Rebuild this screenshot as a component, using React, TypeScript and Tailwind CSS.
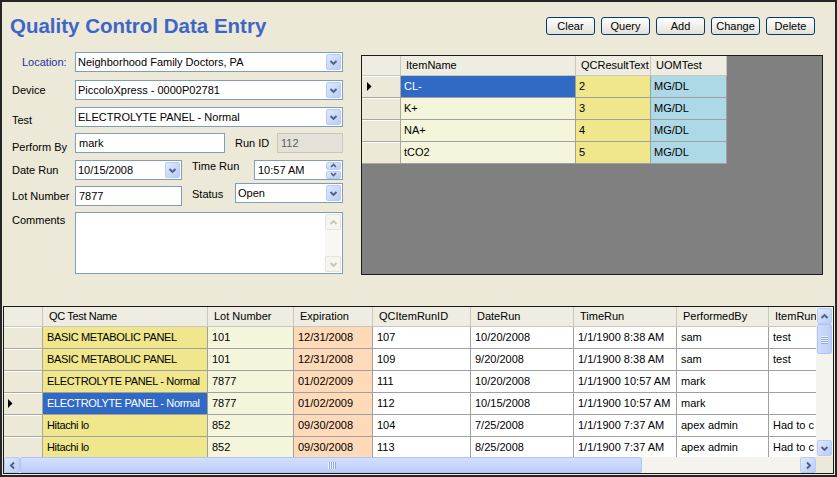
import React from "react";

type Dir = "up" | "down" | "left" | "right";

const CHEVRON: Record<Dir, string> = {
  down: "M1.5 3 L4.5 6 L7.5 3",
  up: "M1.5 6 L4.5 3 L7.5 6",
  left: "M6 1.5 L3 4.5 L6 7.5",
  right: "M3 1.5 L6 4.5 L3 7.5",
};

const Chevron = ({ dir, color = "#4d6185" }: { dir: Dir; color?: string }) => (
  <svg width="9" height="9" viewBox="0 0 9 9">
    <path d={CHEVRON[dir]} fill="none" stroke={color} strokeWidth="1.9" />
  </svg>
);

// XP style light blue button used by combos and scroll bars
const BlueBtn = ({ dir, className }: { dir: Dir; className: string }) => (
  <div
    className={`flex items-center justify-center shrink-0 rounded-[2px] border border-[#b7cbf6] bg-linear-to-br from-[#dfe9fe] to-[#b9ccf7] ${className}`}
  >
    <Chevron dir={dir} />
  </div>
);

const GreyBtn = ({ dir }: { dir: Dir }) => (
  <div className="h-[16px] w-full flex items-center justify-center shrink-0 rounded-[2px] border border-[#e6e4da] bg-[#f6f5f0]">
    <Chevron dir={dir} color="#c8c6b8" />
  </div>
);

const Combo = ({ value, className }: { value: string; className: string }) => (
  <div className={`h-[20px] bg-white border border-[#7f9db9] flex items-center pl-[2px] pr-px shrink-0 ${className}`}>
    <span className="flex-1 whitespace-nowrap overflow-hidden">{value}</span>
    <BlueBtn dir="down" className="w-[15px] h-[16px]" />
  </div>
);

const Label = ({ children, className = "" }: { children: React.ReactNode; className?: string }) => (
  <div className={`shrink-0 whitespace-nowrap ${className}`}>{children}</div>
);

const SelArrow = () => (
  <svg width="5" height="9" viewBox="0 0 5 9">
    <path d="M0 0 L4.5 4.5 L0 9 Z" fill="#000" />
  </svg>
);

const LeftForm = () => (
  <div className="w-[357px] shrink-0 pl-[10px] pt-[12px]">
    <div className="-ml-[2px] text-[20.5px] leading-[24px] font-bold text-[#3f66c6] whitespace-nowrap">
      Quality Control Data Entry
    </div>

    <div className="mt-[14px] flex items-center h-[20px]">
      <Label className="w-[63px] pl-[10px] text-[#22319a]">Location:</Label>
      <Combo value="Neighborhood Family Doctors, PA" className="w-[268px]" />
    </div>

    <div className="mt-[8px] flex items-center h-[20px]">
      <Label className="w-[63px]">Device</Label>
      <Combo value="PiccoloXpress - 0000P02781" className="w-[268px]" />
    </div>

    <div className="mt-[7px] flex items-center h-[20px]">
      <Label className="w-[63px] mt-[6px]">Test</Label>
      <Combo value="ELECTROLYTE PANEL - Normal" className="w-[268px]" />
    </div>

    <div className="mt-[6px] flex items-center h-[20px]">
      <Label className="w-[63px] mt-[8px]">Perform By</Label>
      <div className="w-[150px] h-[20px] bg-white border border-[#7f9db9] pl-[3px] flex items-center">mark</div>
      <Label className="ml-[10px] w-[42px]">Run ID</Label>
      <div className="w-[66px] h-[20px] bg-[#e3e1d8] border border-[#c9c7bb] pl-[3px] flex items-center text-[#5e5e5e]">
        112
      </div>
    </div>

    <div className="mt-[7px] flex items-center h-[20px]">
      <Label className="w-[63px]">Date Run</Label>
      <Combo value="10/15/2008" className="w-[107px]" />
      <Label className="ml-[10px] w-[62px] mb-[8px]">Time Run</Label>
      <div className="w-[89px] h-[20px] bg-white border border-[#7f9db9] pl-[3px] pr-px flex items-center">
        <span className="flex-1">10:57 AM</span>
        <div className="w-[15px] h-[17px] flex flex-col gap-px">
          <div className="flex-1 rounded-[2px] border border-[#b7cbf6] bg-linear-to-br from-[#dfe9fe] to-[#b9ccf7] flex items-center justify-center overflow-hidden">
            <svg width="7" height="5" viewBox="0 0 7 5"><path d="M1 4 L3.5 1.5 L6 4" fill="none" stroke="#4d6185" strokeWidth="1.6" /></svg>
          </div>
          <div className="flex-1 rounded-[2px] border border-[#b7cbf6] bg-linear-to-br from-[#dfe9fe] to-[#b9ccf7] flex items-center justify-center overflow-hidden">
            <svg width="7" height="5" viewBox="0 0 7 5"><path d="M1 1 L3.5 3.5 L6 1" fill="none" stroke="#4d6185" strokeWidth="1.6" /></svg>
          </div>
        </div>
      </div>
    </div>

    <div className="mt-[6px] flex items-center h-[20px]">
      <Label className="w-[63px]">Lot Number</Label>
      <div className="w-[107px] h-[20px] bg-white border border-[#7f9db9] pl-[3px] flex items-center">7877</div>
      <Label className="ml-[10px] w-[43px] mb-[4px]">Status</Label>
      <Combo value="Open" className="w-[108px] mb-[6px]" />
    </div>

    <div className="mt-[6px] flex items-start">
      <Label className="w-[63px] pt-[3px]">Comments</Label>
      <div className="w-[268px] h-[62px] bg-white border border-[#7f9db9] flex justify-end p-px">
        <div className="w-[16px] h-full flex flex-col bg-[#f8f7f3]">
          <GreyBtn dir="up" />
          <div className="flex-1" />
          <GreyBtn dir="down" />
        </div>
      </div>
    </div>
  </div>
);

const BUTTONS = ["Clear", "Query", "Add", "Change", "Delete"];

const ITEMS = [
  ["CL-", "2", "MG/DL"],
  ["K+", "3", "MG/DL"],
  ["NA+", "4", "MG/DL"],
  ["tCO2", "5", "MG/DL"],
];

const ITEM_COLS = [
  { title: "ItemName", w: "w-[175px]", bg: "bg-[#f5f5dc]" },
  { title: "QCResultText", w: "w-[75px]", bg: "bg-[#f0e68c]" },
  { title: "UOMTest", w: "w-[76px]", bg: "bg-[#add8e6]" },
];

const RightPane = () => (
  <div className="flex-1 flex flex-col pt-[15px]">
    <div className="flex justify-end gap-[6px] pr-[20px]">
      {BUTTONS.map((b) => (
        <button
          key={b}
          className="w-[49px] h-[18px] rounded-[3px] border border-[#003c74] bg-linear-to-b from-white to-[#e3e1d7] text-[11px] leading-none text-black flex items-center justify-center"
        >
          {b}
        </button>
      ))}
    </div>

    <div className="mt-[20px] ml-[2px] w-[462px] h-[220px] border border-[#1c1c1c] bg-[#808080] overflow-hidden">
      <div className="flex h-[20px]">
        <div className="w-[39px] shrink-0 bg-[#efede2] border-r border-b border-[#c9c7ba]" />
        {ITEM_COLS.map((c) => (
          <div
            key={c.title}
            className={`${c.w} shrink-0 bg-[#efede2] border-r border-b border-[#c9c7ba] pl-[5px] flex items-center whitespace-nowrap overflow-hidden`}
          >
            {c.title}
          </div>
        ))}
      </div>
      {ITEMS.map((r, i) => (
        <div key={i} className="flex h-[22px]">
          <div className="w-[39px] shrink-0 bg-[#ece9d8] border-r border-b border-[#aca899] shadow-[inset_0_1px_0_white] pl-[5px] flex items-center">
            {i === 0 && <SelArrow />}
          </div>
          {ITEM_COLS.map((c, j) => (
            <div
              key={j}
              className={`${c.w} shrink-0 ${i === 0 && j === 0 ? "bg-[#316ac5] text-white" : c.bg} border-r border-b border-[#a0a0a0] pl-[3px] flex items-center whitespace-nowrap overflow-hidden`}
            >
              {r[j]}
            </div>
          ))}
        </div>
      ))}
    </div>
  </div>
);

const RUN_COLS = [
  { title: "QC Test Name", w: "w-[165px] tracking-[-0.35px]", bg: "bg-[#f0e68c]" },
  { title: "Lot Number", w: "w-[86px]", bg: "bg-[#f5f5dc]" },
  { title: "Expiration", w: "w-[79px]", bg: "bg-[#ffdab9]" },
  { title: "QCItemRunID", w: "w-[98px]", bg: "bg-white" },
  { title: "DateRun", w: "w-[103px]", bg: "bg-white" },
  { title: "TimeRun", w: "w-[103px]", bg: "bg-white" },
  { title: "PerformedBy", w: "w-[92px]", bg: "bg-white" },
  { title: "ItemRun", w: "w-[120px]", bg: "bg-white" },
];

const RUNS = [
  ["BASIC METABOLIC PANEL", "101", "12/31/2008", "107", "10/20/2008", "1/1/1900 8:38 AM", "sam", "test"],
  ["BASIC METABOLIC PANEL", "101", "12/31/2008", "109", "9/20/2008", "1/1/1900 8:38 AM", "sam", "test"],
  ["ELECTROLYTE PANEL - Normal", "7877", "01/02/2009", "111", "10/20/2008", "1/1/1900 10:57 AM", "mark", ""],
  ["ELECTROLYTE PANEL - Normal", "7877", "01/02/2009", "112", "10/15/2008", "1/1/1900 10:57 AM", "mark", ""],
  ["Hitachi lo", "852", "09/30/2008", "104", "7/25/2008", "1/1/1900 7:37 AM", "apex admin", "Had to c"],
  ["Hitachi lo", "852", "09/30/2008", "113", "8/25/2008", "1/1/1900 7:37 AM", "apex admin", "Had to c"],
];

const Grip = ({ vertical }: { vertical?: boolean }) => (
  <div className={`flex ${vertical ? "flex-col" : ""} gap-px`}>
    {[0, 1, 2, 3].map((k) => (
      <div key={k} className={vertical ? "w-[7px] h-px bg-[#eef3ff] shadow-[0_1px_0_#8fa8e0]" : "h-[7px] w-px bg-[#eef3ff] shadow-[1px_0_0_#8fa8e0]"} />
    ))}
  </div>
);

const LowerGrid = () => (
  <div className="mx-px h-[168px] border border-[#1a1a1a] flex flex-col bg-white">
    <div className="flex-1 flex min-h-0">
      <div className="flex-1 min-w-0 overflow-hidden">
        <div className="flex h-[20px]">
          <div className="w-[39px] shrink-0 bg-[#efede2] border-r border-b border-[#c9c7ba]" />
          {RUN_COLS.map((c) => (
            <div
              key={c.title}
              className={`${c.w} shrink-0 bg-[#efede2] border-r border-b border-[#c9c7ba] pl-[6px] flex items-center whitespace-nowrap overflow-hidden`}
            >
              {c.title}
            </div>
          ))}
        </div>
        {RUNS.map((r, i) => (
          <div key={i} className="flex h-[22px]">
            <div className="w-[39px] shrink-0 bg-[#ece9d8] border-r border-b border-[#aca899] shadow-[inset_0_1px_0_white] pl-[4px] flex items-center">
              {i === 3 && <SelArrow />}
            </div>
            {RUN_COLS.map((c, j) => (
              <div
                key={j}
                className={`${c.w} shrink-0 ${i === 3 && j === 0 ? "bg-[#316ac5] text-white" : c.bg} border-r border-b border-[#a0a0a0] pl-[4px] flex items-center whitespace-nowrap overflow-hidden`}
              >
                {r[j]}
              </div>
            ))}
          </div>
        ))}
      </div>
      {/* vertical scroll bar */}
      <div className="w-[17px] shrink-0 flex flex-col bg-[#f4f3ee] p-px">
        <BlueBtn dir="up" className="w-full h-[16px]" />
        <div className="h-[30px] shrink-0 rounded-[2px] border border-[#b0c4f4] bg-linear-to-r from-[#cfdcfd] to-[#bccdf8] flex items-center justify-center">
          <Grip vertical />
        </div>
        <div className="flex-1" />
        <BlueBtn dir="down" className="w-full h-[16px]" />
      </div>
    </div>
    {/* horizontal scroll bar */}
    <div className="h-[16px] shrink-0 flex bg-[#f4f3ee]">
      <BlueBtn dir="left" className="w-[16px] h-full" />
      <div className="w-[622px] shrink-0 rounded-[2px] border border-[#b0c4f4] bg-linear-to-b from-[#d3dffd] to-[#bccdf8] flex items-center justify-center">
        <Grip />
      </div>
      <div className="flex-1" />
      <BlueBtn dir="right" className="w-[16px] h-full" />
      <div className="w-[17px] shrink-0 bg-[#ece9d8]" />
    </div>
  </div>
);

export default function App() {
  return (
    <div className="w-[837px] h-[477px] bg-[#ece9d8] border-2 border-[#262626] flex flex-col overflow-hidden font-['Liberation_Sans',Arial,sans-serif] text-[11px] leading-none text-black">
      <div className="h-[304px] shrink-0 flex">
        <LeftForm />
        <RightPane />
      </div>
      <LowerGrid />
    </div>
  );
}
